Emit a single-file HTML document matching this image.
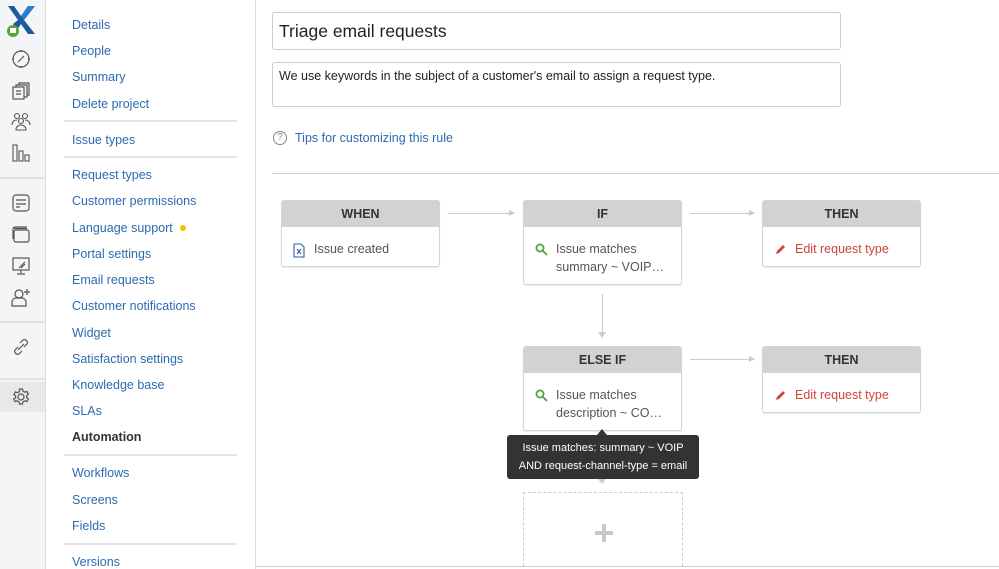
<!DOCTYPE html>
<html><head><style>
*{margin:0;padding:0;box-sizing:border-box}
html,body{width:999px;height:569px;overflow:hidden}
body{background:#fff;font-family:"Liberation Sans",Arial,sans-serif;position:relative}
.a{position:absolute}
#side{left:0;top:0;width:46px;height:569px;background:#f4f5f7;border-right:1px solid #dcdcdc}
.hr{position:absolute;height:2px;background:#e2e2e2}
.nav{position:absolute;left:72px;font-size:12.5px;color:#2d6ab0;white-space:nowrap}
.box{position:absolute;width:159px;background:#fff;border:1px solid #d5d5d5;border-radius:3px;box-shadow:0 1px 1px rgba(0,0,0,.08)}
.box .h{height:26px;background:#d2d2d2;text-align:center;font-weight:bold;font-size:12.5px;line-height:27px;color:#333}
.box .b{padding:14px 8px 0 32px;font-size:12.5px;color:#555;line-height:17.5px;position:relative;white-space:nowrap}
.box .b svg{position:absolute;left:11px;top:16px}
.arr{position:absolute;height:1px;background:#ccc}
.arr:after{content:"";position:absolute;right:-1px;top:-3px;border-left:6px solid #ccc;border-top:3.5px solid transparent;border-bottom:3.5px solid transparent}
</style></head><body>
<div id="side" class="a">
<svg class="a" style="left:4px;top:3px" width="34" height="34" viewBox="0 0 34 34"><path d="M10 3 L17 13 L24 3 L31 3 L20 17 L31 31 L24 31 L17 21 L13 27 L9 21 L14 17 L4 3Z" fill="#1e5aa0"/><path d="M24 3 L31 3 L20 17 L17 13Z" fill="#2e7ccc"/><circle cx="9" cy="28" r="6" fill="#54a63a"/><rect x="6" y="25" width="6" height="5" fill="#fff"/></svg>
<svg class="a" style="left:11px;top:49px" width="20" height="20" viewBox="0 0 20 20" fill="none" stroke="#555" stroke-width="1.2"><circle cx="10" cy="10" r="8"/><path d="M13 7 L9 11 L7 13 L11 9Z"/><path d="M10 1v2M10 17v2M1 10h2M17 10h2"/></svg>
<svg class="a" style="left:11px;top:81px" width="20" height="20" viewBox="0 0 20 20" fill="none" stroke="#555" stroke-width="1.2"><rect x="2" y="6" width="11" height="12"/><path d="M5 6V4h11v12h-3M8 4V2h10v12h-2M5 10h5M5 13h5"/></svg>
<svg class="a" style="left:10px;top:111px" width="22" height="20" viewBox="0 0 22 20" fill="none" stroke="#555" stroke-width="1.1"><circle cx="7" cy="5" r="2.5"/><circle cx="15" cy="5" r="2.5"/><circle cx="11" cy="10" r="2.5"/><path d="M2 14c0-3 2-5 5-5M20 14c0-3-2-5-5-5M6 19c0-3 2-5 5-5s5 2 5 5Z"/></svg>
<svg class="a" style="left:11px;top:143px" width="20" height="20" viewBox="0 0 20 20" fill="none" stroke="#555" stroke-width="1.1"><rect x="2" y="2" width="4" height="16"/><rect x="8" y="8" width="4" height="10"/><rect x="14" y="12" width="4" height="6"/></svg>
<div class="hr" style="left:0;top:177px;width:45px"></div>
<svg class="a" style="left:11px;top:193px" width="20" height="20" viewBox="0 0 20 20" fill="none" stroke="#555" stroke-width="1.2"><rect x="2" y="2" width="16" height="16" rx="3"/><path d="M5 7h10M5 11h10M5 14h4"/></svg>
<svg class="a" style="left:11px;top:224px" width="20" height="20" viewBox="0 0 20 20" fill="none" stroke="#555" stroke-width="1.2"><rect x="3" y="6" width="15" height="12" rx="2"/><path d="M2 15V5a2 2 0 012-2h12"/><path d="M3 4.5h13"/></svg>
<svg class="a" style="left:11px;top:256px" width="20" height="20" viewBox="0 0 20 20" fill="none" stroke="#555" stroke-width="1.2"><rect x="2" y="2" width="16" height="12"/><path d="M8 12l6-6M10 12l4-4M10 14v3M6 18h8"/></svg>
<svg class="a" style="left:10px;top:287px" width="22" height="20" viewBox="0 0 22 20" fill="none" stroke="#555" stroke-width="1.2"><circle cx="9" cy="7" r="4"/><path d="M2 19v-4c0-2 2-4 4-4h6c2 0 4 2 4 4v4Z"/><path d="M17 2v6M14 5h6"/></svg>
<div class="hr" style="left:0;top:321px;width:45px"></div>
<svg class="a" style="left:11px;top:337px" width="20" height="20" viewBox="0 0 20 20" fill="none" stroke="#555" stroke-width="1.2"><path d="M9 6l3-3a3 3 0 014 4l-3 3M11 14l-3 3a3 3 0 01-4-4l3-3M7 13l6-6"/></svg>
<div class="hr" style="left:0;top:378px;width:45px"></div>
<div class="a" style="left:0;top:382px;width:45px;height:30px;background:#e8e8e8"></div>
<svg class="a" style="left:11px;top:387px" width="20" height="20" viewBox="0 0 20 20" fill="none" stroke="#555" stroke-width="1.2"><circle cx="10" cy="10" r="3"/><path d="M8.5 2h3l.5 2.2 1.8 1 2.1-.8 1.5 2.6-1.7 1.5v2l1.7 1.5-1.5 2.6-2.1-.8-1.8 1-.5 2.2h-3l-.5-2.2-1.8-1-2.1.8-1.5-2.6L4.6 11V9L2.9 7.5 4.4 4.9l2.1.8 1.8-1Z"/></svg>
</div>

<div class="a" style="left:255px;top:0;width:1px;height:569px;background:#dcdcdc"></div>
<div class="nav" style="top:18px">Details</div>
<div class="nav" style="top:44px">People</div>
<div class="nav" style="top:70px">Summary</div>
<div class="nav" style="top:97px">Delete project</div>
<div class="hr" style="left:64px;top:120px;width:173px"></div>
<div class="nav" style="top:133px">Issue types</div>
<div class="hr" style="left:64px;top:156px;width:173px"></div>
<div class="nav" style="top:168px">Request types</div>
<div class="nav" style="top:194px">Customer permissions</div>
<div class="nav" style="top:221px">Language support</div>
<div class="a" style="left:180px;top:225px;width:6px;height:6px;border-radius:50%;background:#f5c000"></div>
<div class="nav" style="top:247px">Portal settings</div>
<div class="nav" style="top:273px">Email requests</div>
<div class="nav" style="top:299px">Customer notifications</div>
<div class="nav" style="top:326px">Widget</div>
<div class="nav" style="top:352px">Satisfaction settings</div>
<div class="nav" style="top:378px">Knowledge base</div>
<div class="nav" style="top:404px">SLAs</div>
<div class="nav" style="top:430px;color:#333;font-weight:bold">Automation</div>
<div class="hr" style="left:64px;top:454px;width:173px"></div>
<div class="nav" style="top:466px">Workflows</div>
<div class="nav" style="top:493px">Screens</div>
<div class="nav" style="top:519px">Fields</div>
<div class="hr" style="left:64px;top:543px;width:173px"></div>
<div class="nav" style="top:555px">Versions</div>

<div class="a" style="left:272px;top:12px;width:569px;height:38px;border:1px solid #ccc;border-radius:3px;font-size:17.5px;line-height:36px;padding-left:6px;color:#222">Triage email requests</div>
<div class="a" style="left:272px;top:62px;width:569px;height:45px;border:1px solid #ccc;border-radius:3px;font-size:12.5px;padding:6px 0 0 6px;color:#222">We use keywords in the subject of a customer's email to assign a request type.</div>
<div class="a" style="left:273px;top:131px;width:14px;height:14px;border:1px solid #888;border-radius:50%;font-size:10px;line-height:12px;text-align:center;color:#888">?</div>
<div class="a" style="left:295px;top:131px;font-size:12.5px;color:#2d6ab0">Tips for customizing this rule</div>
<div class="a" style="left:272px;top:173px;width:727px;height:1px;background:#ccc"></div>

<div class="box" style="left:281px;top:200px;height:67px"><div class="h">WHEN</div><div class="b"><svg width="12" height="15" viewBox="0 0 12 15" fill="none" stroke="#2d5fa0" stroke-width="1.1"><path d="M1 1h7l3 3v10H1Z"/><path d="M4 6l4 5M8 6l-4 5"/></svg>Issue created</div></div>
<div class="arr" style="left:448px;top:213px;width:66px"></div>
<div class="box" style="left:523px;top:200px;height:85px"><div class="h">IF</div><div class="b"><svg width="13" height="13" viewBox="0 0 13 13" fill="none" stroke="#4fa33a" stroke-width="1.8"><circle cx="5" cy="5" r="3.6"/><path d="M8 8l4 4"/></svg>Issue matches<br>summary ~ VOIP…</div></div>
<div class="arr" style="left:690px;top:213px;width:64px"></div>
<div class="box" style="left:762px;top:200px;height:67px"><div class="h">THEN</div><div class="b" style="color:#d04437"><svg width="13" height="13" viewBox="0 0 13 13"><path d="M2 11l1-3 6-6 2 2-6 6Z" fill="#c44"/></svg>Edit request type</div></div>
<div class="a" style="left:602px;top:294px;width:1px;height:40px;background:#ccc"></div>
<div class="a" style="left:598px;top:332px;border-top:6px solid #ccc;border-left:4px solid transparent;border-right:4px solid transparent"></div>
<div class="box" style="left:523px;top:346px;height:85px"><div class="h">ELSE IF</div><div class="b"><svg width="13" height="13" viewBox="0 0 13 13" fill="none" stroke="#4fa33a" stroke-width="1.8"><circle cx="5" cy="5" r="3.6"/><path d="M8 8l4 4"/></svg>Issue matches<br>description ~ CO…</div></div>
<div class="arr" style="left:690px;top:359px;width:64px"></div>
<div class="box" style="left:762px;top:346px;height:67px"><div class="h">THEN</div><div class="b" style="color:#d04437"><svg width="13" height="13" viewBox="0 0 13 13"><path d="M2 11l1-3 6-6 2 2-6 6Z" fill="#c44"/></svg>Edit request type</div></div>

<div class="a" style="left:597px;top:429px;border-bottom:6px solid #333;border-left:5px solid transparent;border-right:5px solid transparent"></div>
<div class="a" style="left:507px;top:435px;width:192px;height:44px;background:#333;border-radius:3px;color:#fff;font-size:11px;text-align:center;line-height:18px;padding-top:4px">Issue matches: summary ~ VOIP<br>AND request-channel-type = email</div>
<div class="a" style="left:598px;top:479px;border-top:5px solid #ccc;border-left:4px solid transparent;border-right:4px solid transparent"></div>
<div class="a" style="left:523px;top:492px;width:160px;height:74px;border:1px dashed #ccc;border-bottom:none"></div>
<div class="a" style="left:595px;top:531px;width:18px;height:4px;background:#c8c8c8"></div>
<div class="a" style="left:602px;top:524px;width:4px;height:18px;background:#c8c8c8"></div>
<div class="a" style="left:256px;top:566px;width:743px;height:1px;background:#ccc"></div>
</body></html>
